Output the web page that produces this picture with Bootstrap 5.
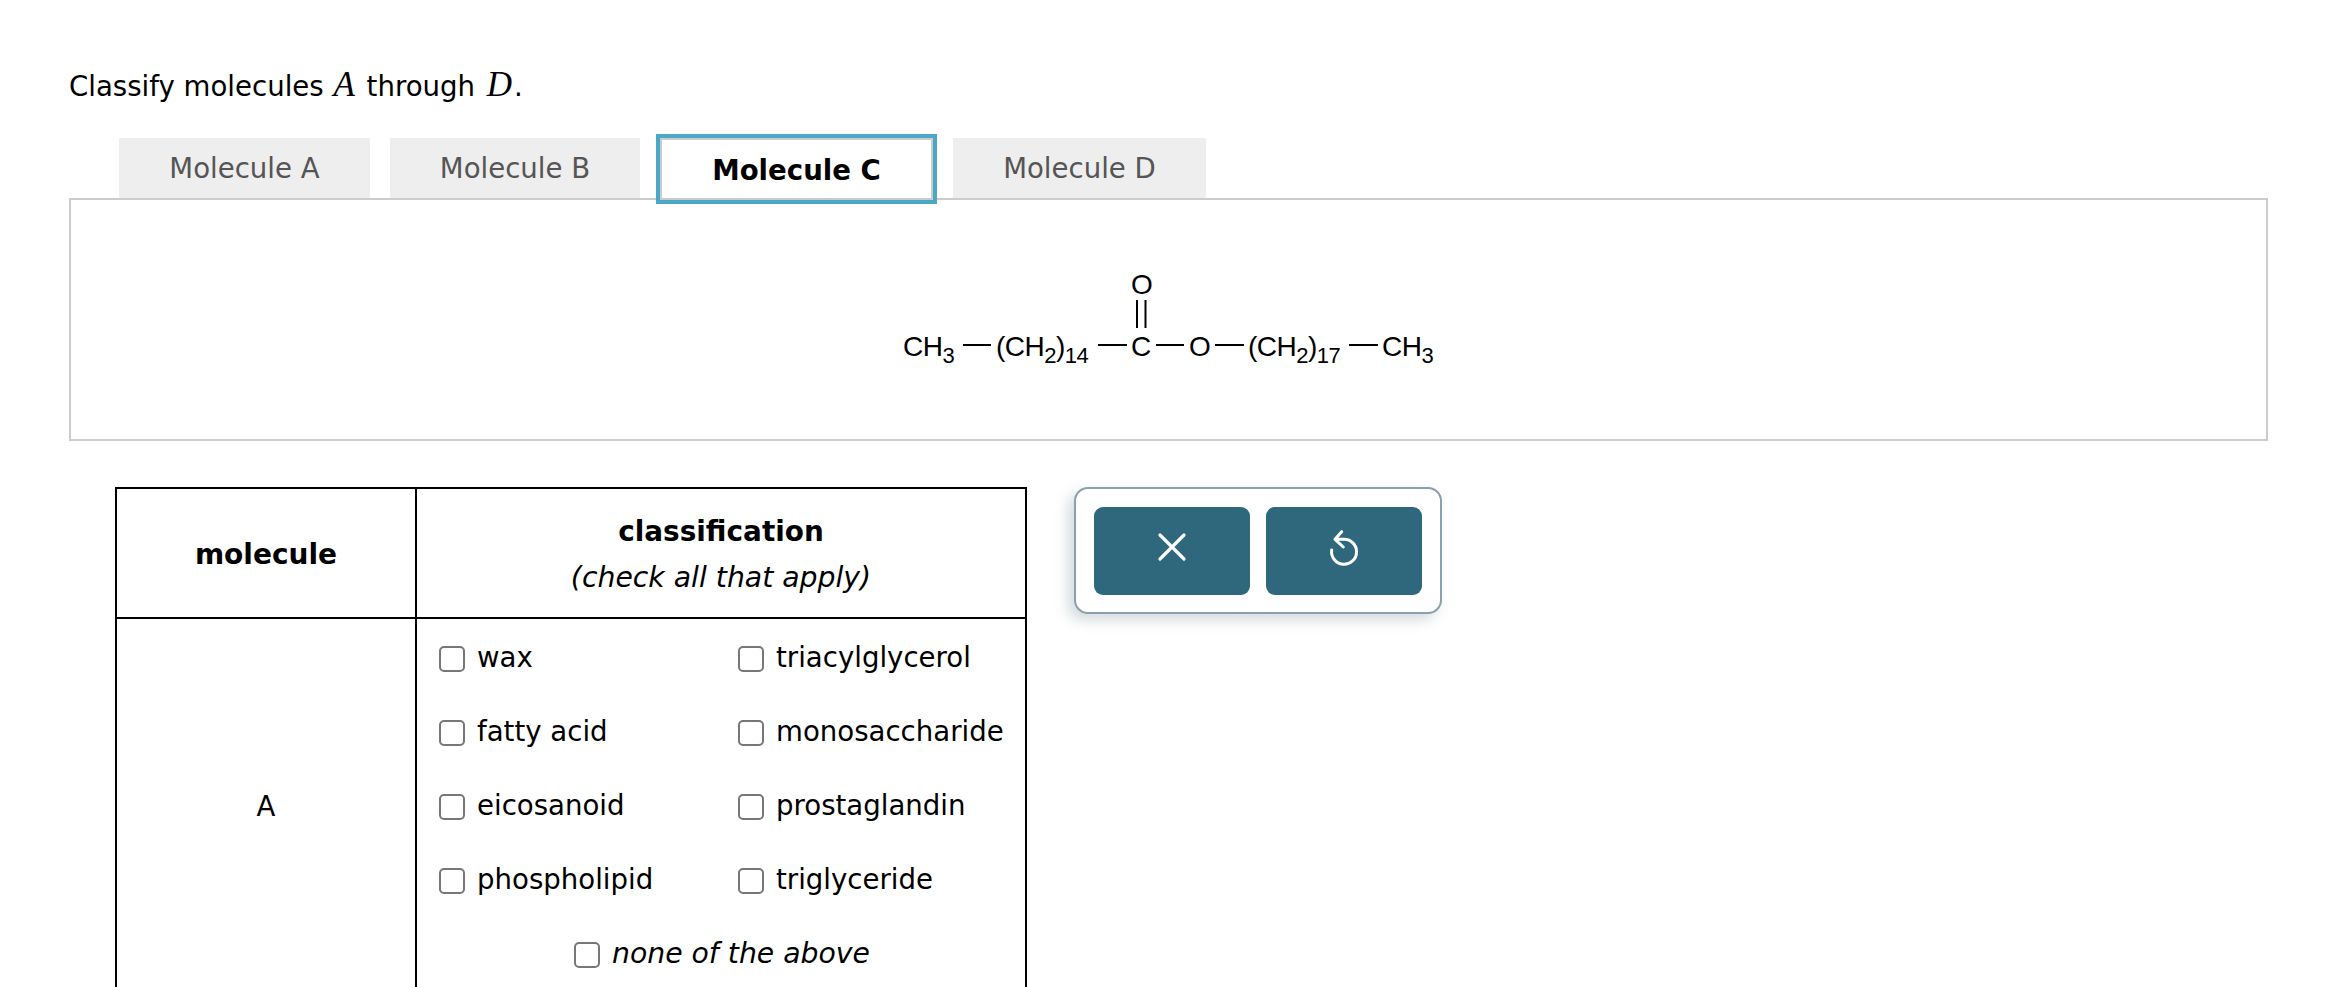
<!DOCTYPE html>
<html lang="en">
<head>
<meta charset="utf-8">
<title>Classify molecules</title>
<link href="https://cdn.jsdelivr.net/npm/bootstrap@5.3.0/dist/css/bootstrap.min.css" rel="stylesheet">
<style>
html,body{height:987px;overflow:hidden;}
body{font-family:"DejaVu Sans",sans-serif;font-size:27.6px;color:#000;background:#fff;}
.page-wrap{padding:66px 68px 0 69px;}
.prompt{font-size:27.6px;line-height:42px;margin:0 0 30px;height:42px;}
.prompt i{font-family:"Liberation Serif",serif;font-size:35px;line-height:30px;}
.prompt .math-a{margin:0 3px 0 1px;}
.prompt .math-d{margin:0 2px 0 3px;}
.tab-row{margin-left:50px;gap:20px;height:60px;position:relative;z-index:1;}
.tab-row .nav-link{width:251px;height:60px;padding:0;background:#eee;color:#555;line-height:62px;text-align:center;font-size:27.6px;border-radius:0;}
.tab-row .tab-b{width:250px;}
.tab-row .tab-d{width:253px;}
.tab-row .nav-link.tab-on{width:273px;height:62px;margin:0 0 -2px;background:#fff;color:#000;font-weight:700;line-height:61px;border:2px solid #ccc;outline:4px solid #4aa8c6;}
.mol-panel{height:243px;border:2px solid #ccc;}
.mol-svg{font-family:"Liberation Sans",sans-serif;font-size:28px;letter-spacing:-.5px;}
.mol-svg .sb{font-size:22px;}
.work-row{margin-top:46px;margin-left:46px;gap:47px;}
.class-table{width:912px;margin:0;border-collapse:collapse;table-layout:fixed;}
.class-table th,.class-table td{border:2px solid #000;padding:0;text-align:center;vertical-align:middle;font-size:27.6px;}
.class-table .col-mol{width:300px;font-size:28px;padding-top:3px;}
.class-table .cell-a{padding-top:3px;}
.class-table thead th{height:130px;}
.class-table .sub{font-weight:400;font-style:italic;font-size:28.300px;line-height:46px;}
.class-table .hd{font-size:27.900px;line-height:46px;padding-top:3px;}
.opts{display:grid;grid-template-columns:299px 1fr;padding:2px 0 0 22px;text-align:left;}
.opt{height:74px;margin:0;padding:0;display:flex;align-items:center;gap:12px;}
.opt .form-check-input{width:26px;height:26px;margin:2px 0 0;border:2px solid #777;border-radius:5px;float:none;flex:none;}
.opt .form-check-label{line-height:1;}
.opt-none{grid-column:1 / 3;justify-content:center;padding-right:20px;font-style:italic;font-size:28.300px;}
.act-box{width:368px;height:127px;margin-top:0;padding:18px;gap:16px;border:2px solid #8aa0ac;border-radius:14px;box-shadow:-6px 6px 14px rgba(60,90,105,.22);background:#fff;}
.act-btn{flex:1;height:88px;padding:0;background:#2f687c;border:0;border-radius:9px;display:flex;align-items:center;justify-content:center;}
</style>
</head>
<body>
<div class="page-wrap">
  <p class="prompt">Classify molecules <i class="math-a">A</i> through <i class="math-d">D</i>.</p>
  <nav class="nav tab-row">
    <a class="nav-link" href="#">Molecule A</a>
    <a class="nav-link tab-b" href="#">Molecule B</a>
    <a class="nav-link tab-on" href="#">Molecule C</a>
    <a class="nav-link tab-d" href="#">Molecule D</a>
  </nav>
  <div class="mol-panel d-flex align-items-center justify-content-center">
    <svg class="mol-svg" width="540" height="112" viewBox="898 262 540 112" fill="#000">
      <g stroke="#000" stroke-width="2" fill="none">
        <path d="M962 343H990M1097 343H1126M1155 343H1183M1214 343H1243M1348 343H1377"/>
        <path d="M1136 298V326M1144.500 298V326"/>
      </g>
      <text x="1130" y="292">O</text>
      <text x="902" y="354">CH<tspan class="sb" dy="7">3</tspan></text>
      <text x="995" y="354">(CH<tspan class="sb" dy="7">2</tspan><tspan dy="-7">)</tspan><tspan class="sb" dy="7">14</tspan></text>
      <text x="1130" y="354">C</text>
      <text x="1188" y="354">O</text>
      <text x="1247" y="354">(CH<tspan class="sb" dy="7">2</tspan><tspan dy="-7">)</tspan><tspan class="sb" dy="7">17</tspan></text>
      <text x="1381" y="354">CH<tspan class="sb" dy="7">3</tspan></text>
    </svg>
  </div>
  <div class="work-row d-flex align-items-start">
    <table class="class-table">
      <thead>
        <tr>
          <th class="col-mol">molecule</th>
          <th><div class="hd">classification</div><div class="sub">(check all that apply)</div></th>
        </tr>
      </thead>
      <tbody>
        <tr>
          <td class="cell-a">A</td>
          <td>
            <div class="opts">
              <div class="opt"><input class="form-check-input" type="checkbox" id="a1"><label class="form-check-label" for="a1">wax</label></div>
              <div class="opt"><input class="form-check-input" type="checkbox" id="a2"><label class="form-check-label" for="a2">triacylglycerol</label></div>
              <div class="opt"><input class="form-check-input" type="checkbox" id="a3"><label class="form-check-label" for="a3">fatty acid</label></div>
              <div class="opt"><input class="form-check-input" type="checkbox" id="a4"><label class="form-check-label" for="a4">monosaccharide</label></div>
              <div class="opt"><input class="form-check-input" type="checkbox" id="a5"><label class="form-check-label" for="a5">eicosanoid</label></div>
              <div class="opt"><input class="form-check-input" type="checkbox" id="a6"><label class="form-check-label" for="a6">prostaglandin</label></div>
              <div class="opt"><input class="form-check-input" type="checkbox" id="a7"><label class="form-check-label" for="a7">phospholipid</label></div>
              <div class="opt"><input class="form-check-input" type="checkbox" id="a8"><label class="form-check-label" for="a8">triglyceride</label></div>
              <div class="opt opt-none"><input class="form-check-input" type="checkbox" id="a9"><label class="form-check-label" for="a9">none of the above</label></div>
            </div>
          </td>
        </tr>
      </tbody>
    </table>
    <div class="act-box d-flex">
      <button class="act-btn" type="button" aria-label="Clear">
        <svg width="44" height="44" viewBox="0 0 44 44" fill="none" stroke="#fff" stroke-width="3.200" stroke-linecap="round"><path d="M10 6L34 30M34 6L10 30"/></svg>
      </button>
      <button class="act-btn" type="button" aria-label="Reset">
        <svg width="44" height="44" viewBox="-4 2 44 44" fill="none" stroke="#fff" stroke-width="3" stroke-linecap="round" stroke-linejoin="round"><path d="M15.700 4.700L9 12.300L17.300 20M9 12.300H18A12.500 12.500 0 1 1 5.700 23"/></svg>
      </button>
    </div>
  </div>
</div>
<script src="https://cdn.jsdelivr.net/npm/bootstrap@5.3.0/dist/js/bootstrap.bundle.min.js"></script>
</body>
</html>
